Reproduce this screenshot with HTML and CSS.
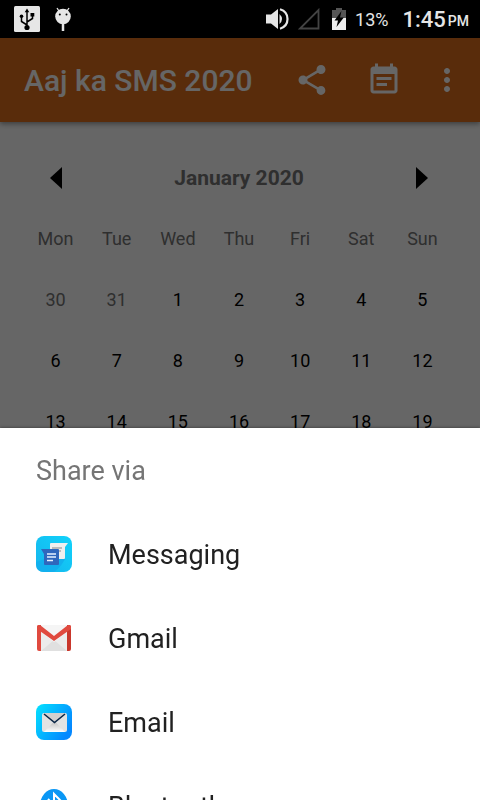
FILE: index.html
```html
<!DOCTYPE html>
<html lang="en">
<head>
<meta charset="utf-8">
<meta name="viewport" content="width=device-width, initial-scale=1">
<title>Aaj ka SMS 2020</title>
<link rel="stylesheet" href="styles.css">
</head>
<body>
<header class="status">
  <div class="status-left">
    <svg width="26" height="26" viewBox="0 0 26 26" aria-hidden="true">
      <rect width="26" height="26" rx="1.500" fill="#e6e6e6"/>
      <path d="M13 5v17M13 19l-5.500-3.500V11M13 16l5.500-3.500V9" fill="none" stroke="#000" stroke-width="1.500"/>
      <path d="M13 2.500l2.300 3.700h-4.600zM16.500 7h3.800v3.600h-3.800z"/>
      <circle cx="7.500" cy="10.300" r="1.800"/><circle cx="13" cy="21.500" r="2.600"/>
    </svg>
    <svg width="18" height="26" viewBox="0 0 18 26" aria-hidden="true">
      <g fill="none" stroke="#e6e6e6"><path d="M5 5L3 2M13 5l2-3" stroke-width="1.300"/><path d="M9 18v7" stroke-width="2.500"/></g>
      <circle cx="9" cy="10.500" r="7.800" fill="#e6e6e6"/>
      <circle cx="5.800" cy="8.500" r="1"/><circle cx="12.500" cy="8.500" r="1"/>
    </svg>
  </div>
  <div class="status-right">
    <svg class="volume" width="24" height="24" viewBox="0 0 24 24" aria-hidden="true">
      <path d="M1 7.500h5L13 2v20l-7-5.500H1z" fill="#e6e6e6"/>
      <path d="M14.500 7q5 5 0 10z" fill="#e6e6e6"/>
      <path d="M15 2.300c10 3 10 16.400 0 19.400" fill="none" stroke="#e6e6e6" stroke-width="2.200"/>
    </svg>
    <svg class="signal" width="22" height="22" viewBox="0 0 22 22" aria-hidden="true"><path d="M2 20.500H20.500V2z" fill="none" stroke="#444" stroke-width="1.800"/></svg>
    <svg class="battery" width="14" height="22" viewBox="0 0 14 22" aria-hidden="true">
      <path d="M0 2h4V0h6v2h4v8H0z" fill="#555"/><path d="M0 10h14v12H0z" fill="#efefef"/>
      <path d="M9.500 3L2.500 12.500H6L4.500 19l7.300-9.500H8z"/>
    </svg>
    <span class="percent">13%</span>
    <span class="time">1:45</span><span class="ampm">PM</span>
  </div>
</header>
<main class="app">
  <div class="toolbar">
    <h1>Aaj ka SMS 2020</h1>
    <button class="share" aria-label="Share">
      <svg width="36" height="36" viewBox="0 0 24 24"><path d="M18 16.080c-.76 0-1.440.3-1.960.77L8.910 12.700c.05-.23.09-.46.09-.7s-.04-.47-.09-.7l7.050-4.110c.54.5 1.250.81 2.040.81 1.660 0 3-1.340 3-3s-1.340-3-3-3-3 1.340-3 3c0 .24.04.47.09.7L8.040 9.810C7.500 9.310 6.790 9 6 9c-1.660 0-3 1.340-3 3s1.340 3 3 3c.79 0 1.500-.31 2.040-.81l7.120 4.160c-.05.21-.08.43-.08.65 0 1.610 1.310 2.920 2.920 2.920s2.920-1.310 2.920-2.920-1.310-2.920-2.920-2.920z" fill="currentColor"/></svg>
    </button>
    <button class="events" aria-label="Events">
      <svg width="36" height="36" viewBox="0 0 24 24"><path d="M17 10H7v2h10v-2zm2-7h-1V1h-2v2H8V1H6v2H5c-1.110 0-1.990.9-1.990 2L3 19c0 1.100.89 2 2 2h14c1.100 0 2-.9 2-2V5c0-1.100-.9-2-2-2zm0 16H5V8h14v11zm-5-5H7v2h7v-2z" fill="currentColor"/></svg>
    </button>
    <button class="more" aria-label="More options">
      <svg width="36" height="36" viewBox="0 0 24 24"><path d="M12 8c1.100 0 2-.9 2-2s-.9-2-2-2-2 .9-2 2 .9 2 2 2zm0 2c-1.100 0-2 .9-2 2s.9 2 2 2 2-.9 2-2-.9-2-2-2zm0 6c-1.100 0-2 .9-2 2s.9 2 2 2 2-.9 2-2-.9-2-2-2z" fill="currentColor"/></svg>
    </button>
  </div>
  <section class="calendar">
    <div class="month">
      <button aria-label="Previous month"><svg width="12" height="22" viewBox="0 0 12 22"><path d="M12 0v22L0 11z"/></svg></button>
      <h2>January 2020</h2>
      <button aria-label="Next month"><svg width="12" height="22" viewBox="0 0 12 22"><path d="M0 0v22l12-11z"/></svg></button>
    </div>
    <table>
      <thead><tr><th>Mon</th><th>Tue</th><th>Wed</th><th>Thu</th><th>Fri</th><th>Sat</th><th>Sun</th></tr></thead>
      <tbody>
        <tr><td class="other">30</td><td class="other">31</td><td>1</td><td>2</td><td>3</td><td>4</td><td>5</td></tr>
        <tr><td>6</td><td>7</td><td>8</td><td>9</td><td>10</td><td>11</td><td>12</td></tr>
        <tr><td>13</td><td>14</td><td>15</td><td>16</td><td>17</td><td>18</td><td>19</td></tr>
      </tbody>
    </table>
  </section>
  <div class="scrim"></div>
</main>
<section class="sheet" role="dialog" aria-labelledby="sheet-title">
  <h2 id="sheet-title">Share via</h2>
  <button class="target">
    <svg width="36" height="36" viewBox="0 0 36 36" aria-hidden="true">
      <defs><linearGradient id="msg" x1="0" y1="1" x2="1" y2="0"><stop offset="0" stop-color="#16b4ec"/><stop offset="1" stop-color="#10d2fb"/></linearGradient></defs>
      <rect width="36" height="36" rx="8" fill="url(#msg)"/>
      <path d="M0 26Q8 24 14 19l15 4q-4 8-11 13H8q-8 0-8-8z" fill="#12b0ee"/>
      <path d="M14 8q0-1 1-1h17l-3 4v11q0 1-1 1H14z" fill="#efefef"/>
      <path d="M16 12h10M16 15h9" stroke="#aaa" stroke-width="1.500"/>
      <path d="M5 13h17q1 0 1 1v14q0 1-1 1H9q-1 0-1-1V18z" fill="#2f67bd"/>
      <path d="M11 18h9M11 21h9M11 24.500h6" stroke="#e8f2ff" stroke-width="1.600"/>
    </svg>
    <span>Messaging</span>
  </button>
  <button class="target">
    <svg width="36" height="36" viewBox="0 0 36 36" aria-hidden="true">
      <path d="M3 5h30v26H3z" fill="#ececec"/>
      <path d="M5 31l13-11 13 11z" fill="#e0e0e0"/><path d="M5 12l13 10 13-10v-7H5z" fill="#f5f5f5"/>
      <path d="M1 7q0-2 2-2h2v26H3q-2 0-2-2z" fill="#e04a3f"/>
      <path d="M31 5h2q2 0 2 2v22q0 2-2 2h-2z" fill="#c9372c"/>
      <path d="M1 7q0-2 2-2h1l14 11L32 5h1q2 0 2 2v2L18 21 1 9z" fill="#e04a3f"/>
    </svg>
    <span>Gmail</span>
  </button>
  <button class="target">
    <svg width="36" height="36" viewBox="0 0 36 36" aria-hidden="true">
      <defs>
        <linearGradient id="mail" x1="0" y1="0" x2="1" y2="0.600"><stop offset="0" stop-color="#04e2ff"/><stop offset="1" stop-color="#0488ff"/></linearGradient>
        <linearGradient id="paper" x1="0" y1="0" x2="0" y2="1"><stop offset="0" stop-color="#bbb"/><stop offset="1" stop-color="#fff"/></linearGradient>
      </defs>
      <rect width="36" height="36" rx="8" fill="url(#mail)"/>
      <rect x="6" y="9" width="25" height="19" rx="2" fill="#e3e3e3"/>
      <path d="M8 28l10.500-11L29 28z" fill="url(#paper)"/>
      <path d="M8 9h21L18.500 18z" fill="#d2d0cf"/>
      <path d="M8 10l10.500 8.500L29 10" fill="none" stroke="#0b2747" stroke-width="1.600"/>
    </svg>
    <span>Email</span>
  </button>
  <button class="target">
    <svg width="36" height="36" viewBox="0 0 36 36" aria-hidden="true">
      <ellipse cx="18" cy="18" rx="14" ry="17" fill="#0a97f5"/>
      <path d="M12 11l12 13-6 6V6l6 6-12 13" fill="none" stroke="#fff" stroke-width="2"/>
    </svg>
    <span>Bluetooth</span>
  </button>
</section>
</body>
</html>
```
FILE: styles.css
```css
* { box-sizing: border-box; }
body {
  margin: 0;
  height: 100vh;
  display: flex;
  flex-direction: column;
  overflow: hidden;
  background: #fff;
  font-family: Roboto, "Liberation Sans", sans-serif;
}
h1, h2 { margin: 0; }
button {
  padding: 0;
  border: 0;
  background: none;
  font: inherit;
  color: inherit;
}
svg { display: block; }

.status {
  display: flex;
  justify-content: space-between;
  height: 38px;
  padding: 0 11px 0 14px;
  background: #000;
  color: #e6e6e6;
}
.status-left, .status-right { display: flex; align-items: center; }
.status-left { gap: 14px; }
.volume { margin-right: 9px; }
.signal { margin-right: 12px; }
.battery { margin-right: 9px; }
.percent { font-size: 18px; margin-right: 14px; }
.time { font-size: 22px; font-weight: 500; margin-right: 2px; }
.ampm { font-size: 14px; font-weight: 500; padding-top: 4px; }

.app { position: relative; flex: 1; }
.scrim { position: absolute; inset: 0; background: rgba(0, 0, 0, 0.6); }
.toolbar {
  display: flex;
  align-items: center;
  height: 84px;
  padding: 0 15px 0 24px;
  background: #de6e1c;
  color: #fff;
  box-shadow: 0 2px 5px rgba(0, 0, 0, 0.4);
}
.toolbar h1 { flex: 1; font-size: 30px; font-weight: 500; }
.share { margin-right: 36px; }
.events { margin-right: 27px; }

.calendar { padding: 25px 27px 0 25px; }
.month { display: flex; align-items: center; height: 61px; }
.month button {
  width: 62px;
  height: 60px;
  display: flex;
  align-items: center;
  justify-content: center;
}
.month h2 { flex: 1; text-align: center; font-size: 21px; font-weight: 700; color: #757575; }
table { width: 100%; table-layout: fixed; border-collapse: collapse; }
th, td { height: 61px; padding: 0; text-align: center; font-size: 18px; font-weight: 400; }
th, .other { color: #757575; }

.sheet {
  position: fixed;
  left: 0;
  right: 0;
  bottom: 0;
  height: 372px;
  overflow: hidden;
  background: #fff;
  color: #212121;
  box-shadow: 0 0 3px rgba(0, 0, 0, 0.5);
}
.sheet h2 {
  height: 84px;
  padding: 0 36px;
  line-height: 86px;
  font-size: 27px;
  font-weight: 400;
  color: #757575;
}
.target {
  display: flex;
  align-items: center;
  gap: 36px;
  width: 100%;
  height: 84px;
  padding: 0 36px;
  font-size: 27px;
  text-align: left;
}
.target span { padding-top: 2px; }
```
